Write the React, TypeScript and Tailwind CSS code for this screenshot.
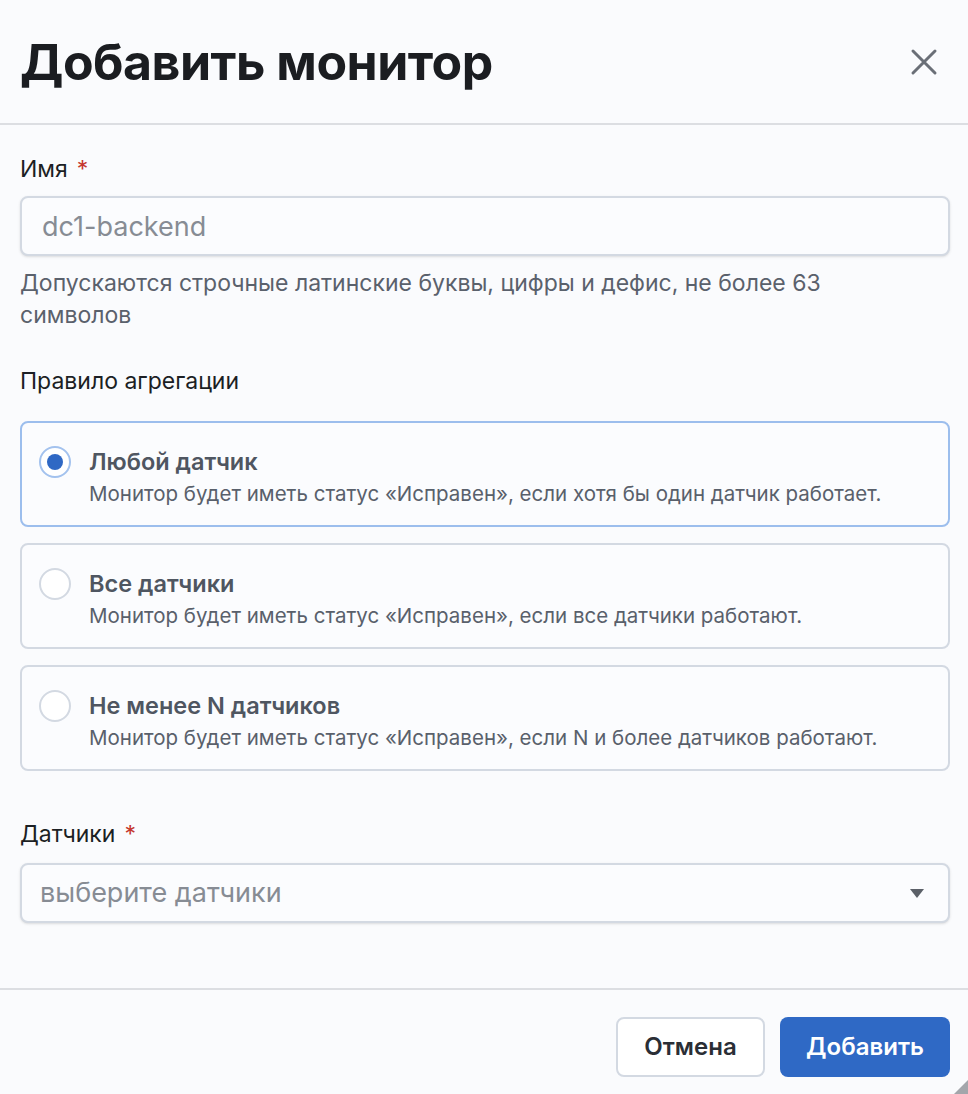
import React, { useState } from 'react';

type Rule = {
    id: string;
    title: string;
    description: string;
};

const RULES: Rule[] = [
    { id: 'any', title: 'Любой датчик', description: 'Монитор будет иметь статус «Исправен», если хотя бы один датчик работает.' },
    { id: 'all', title: 'Все датчики', description: 'Монитор будет иметь статус «Исправен», если все датчики работают.' },
    { id: 'n', title: 'Не менее N датчиков', description: 'Монитор будет иметь статус «Исправен», если N и более датчиков работают.' },
];

const FieldLabel: React.FC<{ text: string; required?: boolean }> = ({ text, required }) => (
    <p className="text-[23px] leading-[28px] text-[#1c1f24]">
        {text}
        {required && <span className="ml-[9px] text-[#c5362e]">*</span>}
    </p>
);

const RuleCard: React.FC<{ rule: Rule; selected: boolean; onSelect: () => void }> = ({ rule, selected, onSelect }) => (
    <button
        type="button"
        onClick={onSelect}
        className={`flex w-full items-start gap-[18px] rounded-[8px] border-2 bg-[#fbfcfe] pl-[17px] pr-4 pt-[25px] pb-[17px] text-left ${
            selected ? 'border-[#9cbeed]' : 'border-[#d3d9e2]'
        }`}
    >
        <span
            className={`mt-[-2px] flex h-[32px] w-[32px] shrink-0 items-center justify-center rounded-full border-2 bg-white ${
                selected ? 'border-[#a3c2ee]' : 'border-[#d3d9e2]'
            }`}
        >
            {selected && <span className="h-[16px] w-[16px] rounded-full bg-[#2f68c4]" />}
        </span>
        <span className="flex flex-col gap-[4px]">
            <span className="text-[23.5px] leading-[28px] font-semibold text-[#4f5661]">{rule.title}</span>
            <span className="text-[20.5px] leading-[28px] text-[#59606b]">{rule.description}</span>
        </span>
    </button>
);

const App: React.FC = () => {
    const [rule, setRule] = useState('any');

    return (
        <div className="relative flex h-[1094px] w-full flex-col overflow-hidden bg-[#fafbfd] font-['Inter','Noto_Sans',sans-serif]">
            <div className="flex h-[125px] shrink-0 items-center justify-between border-b-2 border-[#dcdee2] pl-[20px] pr-[30px]">
                <h1 className="text-[50px] leading-[56px] font-bold tracking-[-0.5px] text-[#1b1d21]">Добавить монитор</h1>
                <button type="button" aria-label="Закрыть" className="text-[#6a6f77]">
                    <svg width="28" height="28" viewBox="0 0 28 28" fill="none" stroke="currentColor" strokeWidth="3" strokeLinecap="round">
                        <path d="M3 3L25 25M25 3L3 25" />
                    </svg>
                </button>
            </div>

            <div className="flex-1 pl-[20px] pr-[18px] pt-[30px]">
                <FieldLabel text="Имя" required />
                <input
                    type="text"
                    placeholder="dc1-backend"
                    className="mt-[13px] h-[60px] w-full rounded-[8px] border-2 border-[#d3d9e2] bg-[#fbfcfe] px-[20px] text-[27px] text-[#1c1f24] shadow-sm outline-none placeholder:text-[#878c94]"
                />
                <p className="mt-[11px] max-w-[880px] text-[23px] leading-[32px] text-[#5a616c]">
                    Допускаются строчные латинские буквы, цифры и дефис, не более 63 символов
                </p>

                <div className="mt-[36px]">
                    <FieldLabel text="Правило агрегации" />
                </div>
                <div className="mt-[26px] flex flex-col gap-[16px]">
                    {RULES.map((r) => (
                        <RuleCard key={r.id} rule={r} selected={rule === r.id} onSelect={() => setRule(r.id)} />
                    ))}
                </div>

                <div className="mt-[49px]">
                    <FieldLabel text="Датчики" required />
                </div>
                <div className="mt-[15px] flex h-[60px] w-full items-center justify-between rounded-[8px] border-2 border-[#d3d9e2] bg-[#fbfcfe] pl-[18px] pr-[24px] shadow-sm">
                    <span className="text-[27px] text-[#878c94]">выберите датчики</span>
                    <svg width="14" height="9" viewBox="0 0 14 9" className="text-[#5b6068]">
                        <path d="M0 0H14L7 9Z" fill="currentColor" />
                    </svg>
                </div>
            </div>

            <div className="flex h-[106px] shrink-0 items-start justify-end gap-[15px] border-t-2 border-[#dcdee2] pt-[27px] pr-[18px]">
                <button
                    type="button"
                    className="h-[60px] w-[149px] rounded-[8px] border-2 border-[#d3d9e2] bg-white text-[24px] font-semibold text-[#2a2e35]"
                >
                    Отмена
                </button>
                <button type="button" className="h-[60px] w-[170px] rounded-[8px] bg-[#2f69c5] text-[24px] font-semibold text-white">
                    Добавить
                </button>
            </div>

            <svg width="14" height="14" viewBox="0 0 14 14" className="absolute right-0 bottom-0 text-[#a3a6ab]">
                <path d="M14 0V14H0Z" fill="currentColor" />
            </svg>
        </div>
    );
};

export default App;
